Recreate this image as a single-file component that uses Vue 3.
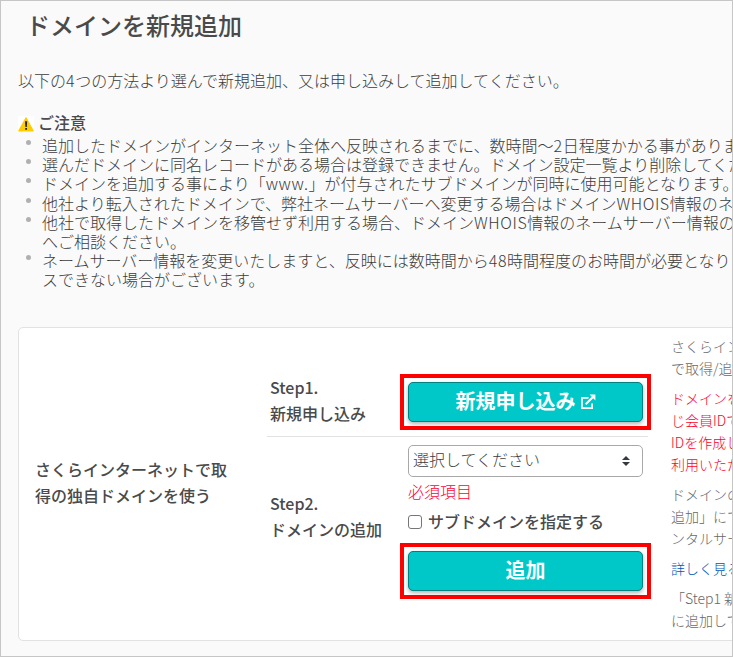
<script setup>
// Splits a line so that Latin runs can carry their own tracking.
const runs = (text) => text.split(/([A-Za-z0-9.]+)/).filter(Boolean).map((t) => ({ t, latin: /^[A-Za-z0-9.]/.test(t) }))

const lead = '以下の4つの方法より選んで新規追加、又は申し込みして追加してください。'
const notices = [
  ['追加したドメインがインターネット全体へ反映されるまでに、数時間～2日程度かかる事があります。'],
  ['選んだドメインに同名レコードがある場合は登録できません。ドメイン設定一覧より削除してください。'],
  ['ドメインを追加する事により「www.」が付与されたサブドメインが同時に使用可能となります。'],
  ['他社より転入されたドメインで、弊社ネームサーバーへ変更する場合はドメインWHOIS情報のネーム'],
  ['他社で取得したドメインを移管せず利用する場合、ドメインWHOIS情報のネームサーバー情報の変更', 'へご相談ください。'],
  ['ネームサーバー情報を変更いたしますと、反映には数時間から48時間程度のお時間が必要となり', 'スできない場合がございます。'],
]
const details = [
  { tone: '', lines: ['さくらインターネット', 'で取得/追加'] },
  { tone: 'alert', lines: ['ドメインを', 'じ会員IDで', 'IDを作成し', '利用いただ'] },
  { tone: '', lines: ['ドメインの', '追加」にて', 'ンタルサーバ'] },
  { tone: 'link', lines: ['詳しく見る'] },
  { tone: '', lines: ['「Step1 新規', 'に追加して'] },
]
</script>

<template>
  <main class="page">
    <h1>ドメインを新規追加</h1>
    <p class="lead"><span v-for="(r, i) in runs(lead)" :key="i" :class="{ latin: r.latin }">{{ r.t }}</span></p>

    <h2>
      <svg class="warn" viewBox="0 0 16 16">
        <rect width="16" height="16" fill="#fff" />
        <path d="M8 1.6 15.4 15H.6Z" fill="#fc0" stroke="#fc0" stroke-width="1" stroke-linejoin="round" />
        <path d="M7 5.2h2.2L8.8 11H7.4ZM7.2 12h1.8v1.8H7.2Z" fill="#222" />
      </svg>
      ご注意
    </h2>
    <ul class="notices">
      <li v-for="(n, i) in notices" :key="i">
        <div v-for="line in n" :key="line"><span v-for="(r, j) in runs(line)" :key="j" :class="{ latin: r.latin }">{{ r.t }}</span></div>
      </li>
    </ul>

    <section class="card">
      <div class="name">さくらインターネットで取<br />得の独自ドメインを使う</div>
      <div class="steps">
        <div class="step first">
          <div class="label">Step1.<br />新規申し込み</div>
          <div class="frame">
            <button class="btn">
              新規申し込み
              <svg class="ext" viewBox="0 0 16 16" fill="none" stroke="#fff" stroke-width="1.8">
                <path d="M8.5 3.9H1.9V14.1H12.1V9.5" />
                <path d="M5.7 10.3 13 3" stroke-width="2" />
                <path d="M9.6.6H15.4V6.4Z" fill="#fff" stroke="none" />
              </svg>
            </button>
          </div>
        </div>
        <div class="step second">
          <div class="label">Step2.<br />ドメインの追加</div>
          <div class="fields">
            <div class="select">
              <span>選択してください</span>
              <svg class="caret" viewBox="0 0 8 10"><path d="M4 0 8 4H0ZM0 6H8L4 10Z" fill="#343a40" /></svg>
            </div>
            <p class="required">必須項目</p>
            <label class="check"><span class="box"></span>サブドメインを指定する</label>
            <div class="frame"><button class="btn">追加</button></div>
          </div>
        </div>
      </div>
      <div class="details">
        <p v-for="(d, i) in details" :key="i" :class="d.tone">
          <span v-for="line in d.lines" :key="line">{{ line }}</span>
        </p>
      </div>
    </section>
  </main>
</template>

<style>
body { margin: 0; overflow: hidden; }
</style>

<style scoped>
* { box-sizing: border-box; }
.page {
  width: 733px;
  height: 657px;
  overflow: hidden;
  border: 1px solid #c6c6c6;
  background: #fafafa;
  color: #3c3c3c;
  font: 300 16px/19.2px "Noto Sans CJK JP", sans-serif;
  white-space: nowrap;
  padding: 6px 0 0 17px;
}
.latin { letter-spacing: .6px; }
h1 { margin: 0 0 0 8px; font-size: 24px; line-height: 36px; font-weight: 500; color: #4a4a4a; }
.lead { margin: 25px 0 0; line-height: 24px; }
h2 { margin: 18px 0 0; display: flex; gap: 4px; font-size: 16px; line-height: 24px; font-weight: 500; color: #4a4a4a; }
.warn { width: 16px; height: 16px; margin-top: 6px; }
.notices { list-style: none; margin: 2px 0 0; padding: 0 0 0 24px; }
.notices li { position: relative; }
.notices li::before {
  content: "";
  position: absolute;
  left: -16px;
  top: 4px;
  width: 5px;
  height: 5px;
  border-radius: 50%;
  background: #b0b0b0;
}
.card {
  display: flex;
  width: 900px;
  height: 314px;
  margin-top: 37px;
  border: 1px solid #e2e2e2;
  border-radius: 5px;
  background: #fff;
}
.name { width: 248px; padding-left: 16px; align-self: center; line-height: 26px; font-weight: 500; margin-top: -4px; color: #4a4a4a; }
.steps { width: 381px; padding-top: 46px; }
.step { display: flex; padding-left: 3px; align-items: flex-start; }
.label { width: 130px; flex: none; line-height: 26px; font-weight: 500; color: #4a4a4a; }
.first { height: 63px; border-bottom: 1px solid #e2e2e2; }
.frame { width: 251px; height: 56px; flex: none; border: 4px solid #f00; padding: 4px; }
.btn {
  display: flex;
  width: 235px;
  height: 40px;
  padding: 0 0 2px;
  align-items: center;
  justify-content: center;
  gap: 4px;
  border: 1px solid #008080;
  border-radius: 5px;
  background: #00c8c8;
  box-shadow: 0 2px 4px rgba(0, 0, 0, .3);
  color: #fff;
  font: 700 20px/30px "Noto Sans CJK JP", sans-serif;
}
.ext { width: 16px; height: 16px; margin-top: 2px; }
.second { padding-top: 8px; }
.second .label { margin-top: 45px; }
.select {
  display: flex;
  width: 235px;
  height: 32px;
  margin-left: 8px;
  justify-content: space-between;
  align-items: center;
  padding: 0 12px 2px 4px;
  border: 1px solid #a8a8a8;
  border-radius: 5px;
}
.caret { width: 8px; height: 10px; margin-top: 2px; }
.required { margin: 3px 0 0 8px; line-height: 22px; color: #ff0033; }
.check { display: flex; align-items: center; margin: 8px 0 0 8px; height: 24px; font-weight: 500; color: #4a4a4a; }
.box { width: 14px; height: 14px; margin-right: 6px; border: 1px solid #767676; border-radius: 3px; background: #fff; }
.second .frame { margin-top: 9px; }
.details { padding: 7px 0 0 23px; color: #686868; font-size: 14px; line-height: 22px; }
.details p { margin: 0 0 8px; }
.details span { display: block; }
.details .alert { color: #ff0028; }
.details .link { color: #0055b8; }
</style>
